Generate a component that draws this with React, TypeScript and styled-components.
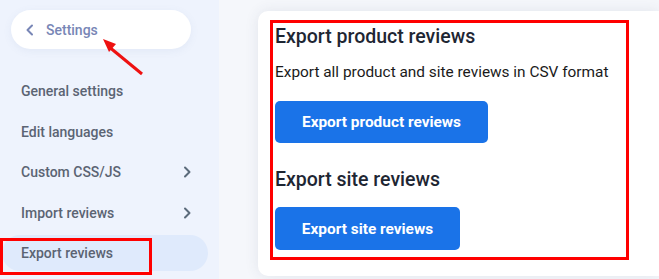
import React from 'react';
import styled, { createGlobalStyle } from 'styled-components';

const GlobalStyle = createGlobalStyle`
  html, body {
    margin: 0;
    padding: 0;
    background: #f5f7fb;
    font-family: Roboto, "Liberation Sans", sans-serif;
  }
`;

const Layout = styled.div`
  display: flex;
  height: 279px;
  overflow: hidden;
`;

const Sidebar = styled.aside`
  position: relative;
  width: 219px;
  flex-shrink: 0;
  background: #eef3fd;
  display: flex;
  flex-direction: column;
`;

const BackPill = styled.div`
  display: flex;
  align-items: center;
  gap: 11px;
  width: 180px;
  height: 39px;
  box-sizing: border-box;
  margin: 10px 0 0 11px;
  padding-left: 14px;
  background: #ffffff;
  border-radius: 20px;
  box-shadow: 0 2px 8px rgba(90, 110, 160, 0.08);
  color: #7886b6;
  font-size: 14px;
  font-weight: 500;
`;

const Menu = styled.nav`
  display: flex;
  flex-direction: column;
  gap: 4.5px;
  margin-top: 24px;
`;

const MenuItem = styled.div<{ active?: boolean }>`
  position: relative;
  display: flex;
  align-items: center;
  justify-content: space-between;
  height: 36px;
  margin-left: 2px;
  width: 206px;
  box-sizing: border-box;
  padding: 0 16px 0 19px;
  border-radius: 18px;
  background: ${p => (p.active ? '#dfeafc' : 'transparent')};
  color: #5b6473;
  font-size: 14px;
  font-weight: 500;
`;

const Highlight = styled.div<{ top: number; left: number; width: number; height: number }>`
  position: absolute;
  top: ${p => p.top}px;
  left: ${p => p.left}px;
  width: ${p => p.width}px;
  height: ${p => p.height}px;
  box-sizing: border-box;
  border: 3px solid #ff0000;
  pointer-events: none;
`;

const Arrow = styled.svg`
  position: absolute;
  left: 96px;
  top: 34px;
  overflow: visible;
`;

const Main = styled.main`
  flex: 1;
  padding: 11px 0 3px 39px;
  display: flex;
  min-width: 0;
`;

const Card = styled.section`
  flex: 1;
  background: #ffffff;
  border-radius: 10px 0 0 10px;
  box-shadow: 0 0 14px rgba(60, 70, 100, 0.1);
  padding: 9px 0 0 12px;
`;

const Marked = styled.div`
  width: 359px;
  height: 240px;
  box-sizing: border-box;
  border: 3px solid #ff0000;
  padding: 0 0 0 2px;
  display: flex;
  flex-direction: column;
  align-items: flex-start;
`;

const Heading = styled.h2<{ gap: number }>`
  margin: ${p => p.gap}px 0 0;
  font-size: 19.5px;
  font-weight: 500;
  line-height: 24px;
  color: #1e2633;
`;

const Text = styled.p`
  margin: 12px 0 0;
  font-size: 15.4px;
  line-height: 22px;
  color: #1a1a1a;
`;

const ExportButton = styled.button<{ w: number; h: number; gap: number }>`
  margin-top: ${p => p.gap}px;
  width: ${p => p.w}px;
  height: ${p => p.h}px;
  border: none;
  border-radius: 5px;
  background: #1a73e8;
  color: #ffffff;
  font-family: Roboto, "Liberation Sans", sans-serif;
  font-size: 15.4px;
  font-weight: 700;
`;

const Chevron = ({ dir, color }: { dir: 'left' | 'right'; color: string }) => (
  <svg width="10" height="12" viewBox="0 0 10 12" fill="none">
    <path
      d={dir === 'left' ? 'M7 1.5L2.5 6L7 10.5' : 'M3 1.5L7.5 6L3 10.5'}
      stroke={color}
      strokeWidth="2"
      strokeLinecap="round"
      strokeLinejoin="round"
    />
  </svg>
);

const items = [
  { label: 'General settings' },
  { label: 'Edit languages' },
  { label: 'Custom CSS/JS', more: true },
  { label: 'Import reviews', more: true },
  { label: 'Export reviews', active: true },
];

export default function App() {
  return (
    <>
      <GlobalStyle />
      <Layout>
        <Sidebar>
          <BackPill>
            <Chevron dir="left" color="#7886b6" />
            Settings
          </BackPill>
          <Arrow width="50" height="45" viewBox="0 0 50 45">
            <line x1="46" y1="40" x2="12" y2="12" stroke="#ee1111" strokeWidth="3" />
            <polygon points="7,5 20,10 13,18" fill="#ee1111" />
          </Arrow>
          <Menu>
            {items.map(item => (
              <MenuItem key={item.label} active={item.active}>
                {item.label}
                {item.more && <Chevron dir="right" color="#5b6b7b" />}
                {item.active && <Highlight top={3} left={-2} width={152} height={37} />}
              </MenuItem>
            ))}
          </Menu>
        </Sidebar>
        <Main>
          <Card>
            <Marked>
              <Heading gap={2}>Export product reviews</Heading>
              <Text>Export all product and site reviews in CSV format</Text>
              <ExportButton w={213} h={42} gap={18}>Export product reviews</ExportButton>
              <Heading gap={25}>Export site reviews</Heading>
              <ExportButton w={185} h={43} gap={15}>Export site reviews</ExportButton>
            </Marked>
          </Card>
        </Main>
      </Layout>
    </>
  );
}
